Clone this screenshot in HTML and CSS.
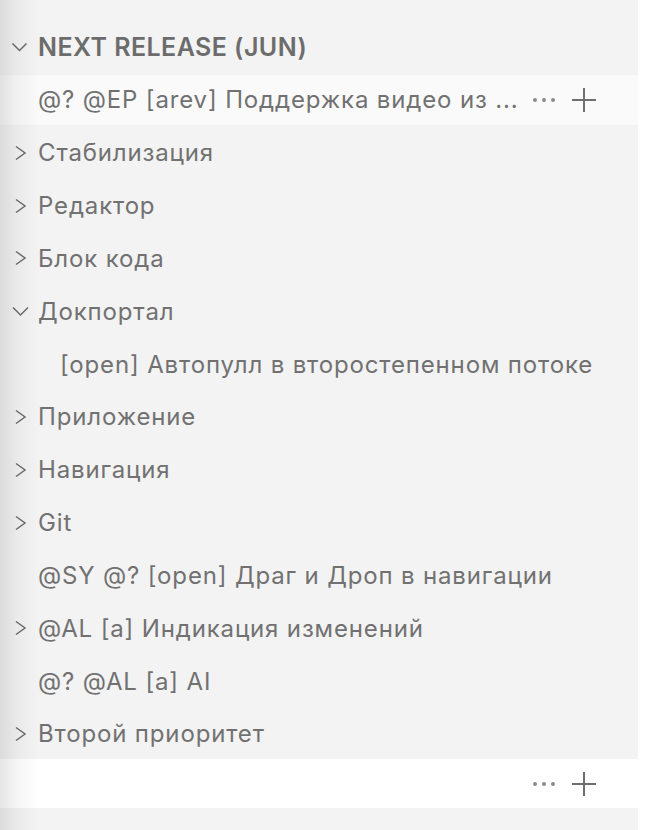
FILE: index.html
```html
<!DOCTYPE html>
<html lang="ru">
<head>
<meta charset="utf-8">
<link rel="stylesheet" href="styles.css">
</head>
<body>
<div class="page">
  <div class="tree">
    <div class="row header">
      <span class="twisty"><svg viewBox="0 0 20 20"><path d="M2.5 6.5 L9.5 13.5 L16.5 6.5"/></svg></span>
      <span class="label">NEXT RELEASE (JUN)</span>
    </div>
    <div class="row hover">
      <span class="twisty"></span>
      <span class="label">@? @EP [arev] Поддержка видео из ...</span>
      <span class="actions">
        <span class="dots"><i></i><i></i><i></i></span>
        <svg class="plus" viewBox="0 0 24 24"><path d="M12 0 V24 M0 12 H24"/></svg>
      </span>
    </div>
    <div class="row"><span class="twisty"><svg viewBox="0 0 20 20"><path d="M6 3.5 L15 10 L6 16.5"/></svg></span><span class="label">Стабилизация</span></div>
    <div class="row"><span class="twisty"><svg viewBox="0 0 20 20"><path d="M6 3.5 L15 10 L6 16.5"/></svg></span><span class="label">Редактор</span></div>
    <div class="row"><span class="twisty"><svg viewBox="0 0 20 20"><path d="M6 3.5 L15 10 L6 16.5"/></svg></span><span class="label">Блок кода</span></div>
    <div class="row"><span class="twisty"><svg viewBox="0 0 20 20"><path d="M3 6.5 L10.5 14 L18 6.5"/></svg></span><span class="label">Докпортал</span></div>
    <div class="row child"><span class="twisty"></span><span class="label">[open] Автопулл в второстепенном потоке</span></div>
    <div class="row"><span class="twisty"><svg viewBox="0 0 20 20"><path d="M6 3.5 L15 10 L6 16.5"/></svg></span><span class="label">Приложение</span></div>
    <div class="row"><span class="twisty"><svg viewBox="0 0 20 20"><path d="M6 3.5 L15 10 L6 16.5"/></svg></span><span class="label">Навигация</span></div>
    <div class="row"><span class="twisty"><svg viewBox="0 0 20 20"><path d="M6 3.5 L15 10 L6 16.5"/></svg></span><span class="label">Git</span></div>
    <div class="row"><span class="twisty"></span><span class="label">@SY @? [open] Драг и Дроп в навигации</span></div>
    <div class="row"><span class="twisty"><svg viewBox="0 0 20 20"><path d="M6 3.5 L15 10 L6 16.5"/></svg></span><span class="label">@AL [a] Индикация изменений</span></div>
    <div class="row"><span class="twisty"></span><span class="label">@? @AL [a] AI</span></div>
    <div class="row"><span class="twisty"><svg viewBox="0 0 20 20"><path d="M6 3.5 L15 10 L6 16.5"/></svg></span><span class="label">Второй приоритет</span></div>
  </div>
  <div class="footer">
    <span class="actions">
      <span class="dots"><i></i><i></i><i></i></span>
      <svg class="plus" viewBox="0 0 24 24"><path d="M12 0 V24 M0 12 H24"/></svg>
    </span>
  </div>
  <div class="bottom"></div>
  <div class="shade"></div>
</div>
</body>
</html>
```

FILE: styles.css
```css
html, body {
  margin: 0;
  padding: 0;
  background: #ffffff;
}
body {
  width: 664px;
  height: 830px;
  overflow: hidden;
  font-family: "Inter", "Noto Sans", sans-serif;
  color: #717171;
}
.page {
  position: relative;
  width: 664px;
  height: 830px;
  display: flex;
  flex-direction: column;
}
.tree {
  width: 638px;
  background: #f3f3f3;
  padding-top: 22px;
  display: flex;
  flex-direction: column;
  gap: 2.85px;
}
.row {
  height: 50px;
  display: flex;
  align-items: center;
  font-size: 24px;
  letter-spacing: 0.85px;
  white-space: nowrap;
}
.row.hover {
  background: #fafafa;
}
.twisty {
  width: 38px;
  flex: none;
  display: flex;
  justify-content: flex-start;
  padding-left: 10px;
  box-sizing: border-box;
}
.twisty svg {
  width: 20px;
  height: 20px;
  fill: none;
  stroke: #6c6c6c;
  stroke-width: 1.5;
}
.child .twisty {
  width: 60px;
}
.header .label {
  font-weight: 600;
  font-size: 25px;
  letter-spacing: 0.45px;
  color: #6c6c6c;
}
.actions {
  margin-left: auto;
  margin-right: 42px;
  display: flex;
  align-items: center;
  gap: 17px;
}
.dots {
  display: flex;
  gap: 5px;
}
.dots i {
  width: 4px;
  height: 4px;
  border-radius: 50%;
  background: #8a8a8a;
}
.plus {
  width: 24px;
  height: 24px;
  fill: none;
  stroke: #6f6f6f;
  stroke-width: 2;
}
.footer {
  margin-top: 1px;
  height: 48px;
  width: 664px;
  background: #ffffff;
  display: flex;
  align-items: center;
  box-sizing: border-box;
  padding-right: 26px;
}
.bottom {
  width: 638px;
  flex: 1;
  background: #f3f3f3;
}
.shade {
  position: absolute;
  left: 0;
  top: 0;
  width: 40px;
  height: 830px;
  pointer-events: none;
  background: linear-gradient(to right, rgba(0,0,0,0.10), rgba(0,0,0,0.04) 40%, rgba(0,0,0,0) 100%);
}
```
